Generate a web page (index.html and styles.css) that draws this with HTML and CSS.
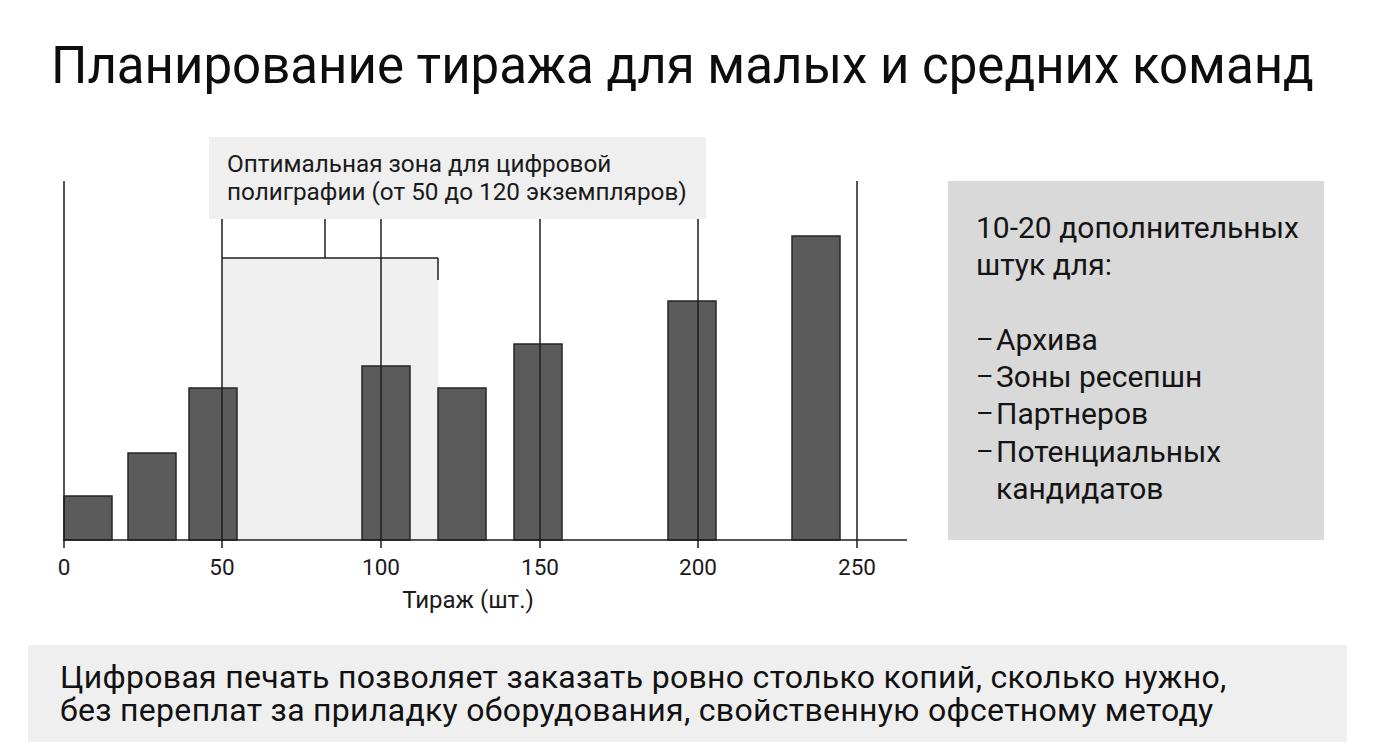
FILE: index.html
```html
<!DOCTYPE html>
<html lang="ru">
<head>
<meta charset="utf-8">
<title>Планирование тиража</title>
<link rel="stylesheet" href="styles.css">
</head>
<body>
<div class="page">
  <h1 class="title">Планирование тиража для малых и средних команд</h1>
  <div class="main">
    <svg class="chart" width="940" height="490" viewBox="0 130 940 490" xmlns="http://www.w3.org/2000/svg">
      <rect class="zone" x="222" y="258" width="216" height="282"/>
      <rect class="note-box" x="209" y="137" width="497" height="82"/>
      <text class="note-text" x="227" y="171.5">Оптимальная зона для цифровой</text>
      <text class="note-text" x="227" y="199.5">полиграфии (от 50 до 120 экземпляров)</text>

      <rect class="bar" x="64" y="496" width="48" height="44"/>
      <rect class="bar" x="128" y="453" width="48" height="87"/>
      <rect class="bar" x="189" y="388" width="48" height="152"/>
      <rect class="bar" x="362" y="366" width="48" height="174"/>
      <rect class="bar" x="438" y="388" width="48" height="152"/>
      <rect class="bar" x="514" y="344" width="48" height="196"/>
      <rect class="bar" x="668" y="301" width="48" height="239"/>
      <rect class="bar" x="792" y="236" width="48" height="304"/>

      <line class="ln" x1="64" y1="181" x2="64" y2="548"/>
      <line class="ln" x1="222" y1="219" x2="222" y2="548"/>
      <line class="ln" x1="381" y1="219" x2="381" y2="548"/>
      <line class="ln" x1="540" y1="219" x2="540" y2="548"/>
      <line class="ln" x1="698" y1="219" x2="698" y2="548"/>
      <line class="ln" x1="857" y1="181" x2="857" y2="548"/>
      <line class="ln" x1="63" y1="540" x2="907" y2="540"/>

      <line class="ln" x1="222" y1="258" x2="438" y2="258"/>
      <line class="ln" x1="325" y1="219" x2="325" y2="258"/>
      <line class="ln" x1="438" y1="258" x2="438" y2="280"/>

      <text class="tick" x="64" y="575">0</text>
      <text class="tick" x="222" y="575">50</text>
      <text class="tick" x="381" y="575">100</text>
      <text class="tick" x="540" y="575">150</text>
      <text class="tick" x="698" y="575">200</text>
      <text class="tick" x="857" y="575">250</text>
      <text class="axis-title" x="468" y="608">Тираж (шт.)</text>
    </svg>
    <div class="side">
      <p class="side-head">10-20 дополнительных штук для:</p>
      <ul class="side-list">
        <li><span class="dash">–</span>Архива</li>
        <li><span class="dash">–</span>Зоны ресепшн</li>
        <li><span class="dash">–</span>Партнеров</li>
        <li><span class="dash">–</span>Потенциальных кандидатов</li>
      </ul>
    </div>
  </div>
  <div class="summary">
    <p>Цифровая печать позволяет заказать ровно столько копий, сколько нужно,<br>без переплат за приладку оборудования, свойственную офсетному методу</p>
  </div>
</div>
</body>
</html>
```
FILE: styles.css
```css
html, body {
  margin: 0;
  padding: 0;
  background: #ffffff;
}
body {
  width: 1376px;
  height: 745px;
  overflow: hidden;
  font-family: Roboto, "Noto Sans", "Liberation Sans", sans-serif;
  color: #111111;
}
.page {
  width: 1376px;
  height: 745px;
}
.title {
  margin: 0;
  box-sizing: border-box;
  height: 130px;
  padding: 36px 0 0 51px;
  font-size: 51px;
  line-height: 60px;
  font-weight: 400;
  color: #0d0d0d;
  white-space: nowrap;
}
.main {
  display: flex;
  height: 490px;
}
.chart {
  flex: none;
  display: block;
}
.zone { fill: #f0f0f0; }
.note-box { fill: #efefef; }
.note-text {
  font-family: Roboto, "Noto Sans", sans-serif;
  font-size: 24.3px;
  fill: #1a1a1a;
}
.bar {
  fill: #5b5b5b;
  stroke: #262626;
  stroke-width: 1.5;
}
.ln {
  stroke: #1e1e1e;
  stroke-width: 1.5;
}
.tick {
  font-family: Roboto, "Noto Sans", sans-serif;
  font-size: 22.5px;
  fill: #1a1a1a;
  text-anchor: middle;
}
.axis-title {
  font-family: Roboto, "Noto Sans", sans-serif;
  font-size: 24px;
  fill: #1a1a1a;
  text-anchor: middle;
}
.side {
  flex: none;
  box-sizing: border-box;
  width: 376px;
  height: 359px;
  margin: 51px 0 0 8px;
  padding: 28px 16px 0 28px;
  background: #d9d9d9;
  font-size: 30px;
  line-height: 37.3px;
  color: #141414;
}
.side-head {
  margin: 0 0 37.3px 0;
  width: 330px;
}
.side-list {
  list-style: none;
  margin: 0;
  padding: 0;
}
.side-list li {
  padding-left: 20px;
  text-indent: -20px;
}
.dash {
  display: inline-block;
  width: 20px;
  text-indent: 0;
  font-size: 27px;
  vertical-align: 1px;
  line-height: 1;
}
.summary {
  box-sizing: border-box;
  width: 1319px;
  height: 97px;
  margin: 25px 0 0 28px;
  padding: 15.5px 0 0 32px;
  background: #efefef;
}
.summary p {
  margin: 0;
  font-size: 32px;
  line-height: 33px;
  letter-spacing: 0.3px;
  color: #111111;
  white-space: nowrap;
}
```
